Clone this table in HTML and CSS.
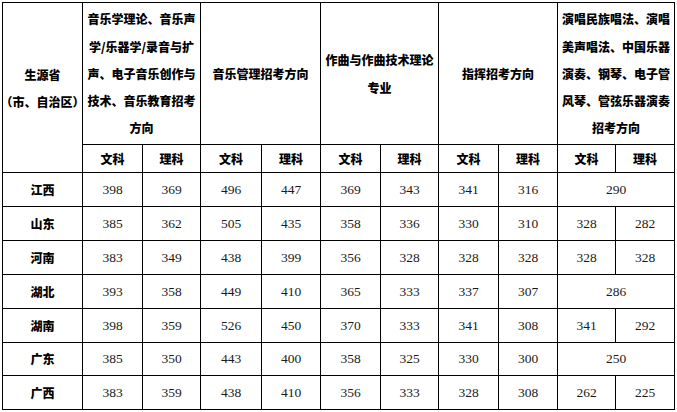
FILE: index.html
```html
<!DOCTYPE html>
<html lang="zh-CN">
<head>
<meta charset="utf-8">
<title>分数线</title>
<link rel="stylesheet" href="styles.css">
</head>
<body>
<table class="score">
  <colgroup>
    <col class="w80"><col class="w60"><col class="w58"><col class="w61"><col class="w59"><col class="w60"><col class="w58"><col class="w60"><col class="w59"><col class="w58"><col class="w59">
  </colgroup>
  <thead>
    <tr class="r-head">
      <th rowspan="2" class="prov-head">生源省<br><span class="nowrap">（市、自治区）</span></th>
      <th colspan="2" class="multi">音乐学理论、音乐声<br>学/乐器学/录音与扩<br>声、电子音乐创作与<br>技术、音乐教育招考<br>方向</th>
      <th colspan="2">音乐管理招考方向</th>
      <th colspan="2" class="multi">作曲与作曲技术理论<br>专业</th>
      <th colspan="2">指挥招考方向</th>
      <th colspan="2" class="multi">演唱民族唱法、演唱<br>美声唱法、中国乐器<br>演奏、钢琴、电子管<br>风琴、管弦乐器演奏<br>招考方向</th>
    </tr>
    <tr class="r-sub">
      <th>文科</th><th>理科</th><th>文科</th><th>理科</th><th>文科</th><th>理科</th><th>文科</th><th>理科</th><th>文科</th><th>理科</th>
    </tr>
  </thead>
  <tbody>
    <tr class="r34"><th>江西</th><td>398</td><td>369</td><td>496</td><td>447</td><td>369</td><td>343</td><td>341</td><td>316</td><td colspan="2">290</td></tr>
    <tr class="r34"><th>山东</th><td>385</td><td>362</td><td>505</td><td>435</td><td>358</td><td>336</td><td>330</td><td>310</td><td>328</td><td>282</td></tr>
    <tr class="r34"><th>河南</th><td>383</td><td>349</td><td>438</td><td>399</td><td>356</td><td>328</td><td>328</td><td>328</td><td>328</td><td>328</td></tr>
    <tr class="r34"><th>湖北</th><td>393</td><td>358</td><td>449</td><td>410</td><td>365</td><td>333</td><td>337</td><td>307</td><td colspan="2">286</td></tr>
    <tr class="r34"><th>湖南</th><td>398</td><td>359</td><td>526</td><td>450</td><td>370</td><td>333</td><td>341</td><td>308</td><td>341</td><td>292</td></tr>
    <tr class="r33"><th>广东</th><td>385</td><td>350</td><td>443</td><td>400</td><td>358</td><td>325</td><td>330</td><td>300</td><td colspan="2">250</td></tr>
    <tr class="r34"><th>广西</th><td>383</td><td>359</td><td>438</td><td>410</td><td>356</td><td>333</td><td>328</td><td>308</td><td>262</td><td>225</td></tr>
  </tbody>
</table>
</body>
</html>
```

FILE: styles.css
```css
html, body {
  margin: 0;
  padding: 0;
  background: #ffffff;
}

body {
  padding: 2px 0 0 2px;
}

.score {
  border-collapse: collapse;
  table-layout: fixed;
  width: 672px;
  font-family: "Noto Sans CJK SC", "Noto Sans", sans-serif;
  color: #000;
}

.w80 { width: 80px; }
.w61 { width: 61px; }
.w60 { width: 60px; }
.w59 { width: 59px; }
.w58 { width: 58px; }

.score th,
.score td {
  border: 1px solid #000;
  padding: 0;
  text-align: center;
  vertical-align: middle;
  overflow: visible;
}

.score th {
  font-weight: 900;
  font-size: 12px;
  line-height: 14px;
}

.score td {
  font-family: "Liberation Serif", serif;
  font-size: 13.5px;
  color: #1a1a1a;
  line-height: 14px;
}

.r-head { height: 142px; }
.r-sub { height: 28px; }
.r34 { height: 34px; }
.r33 { height: 33px; }

.r-head th {
  line-height: 27.3px;
}

.prov-head {
  line-height: 26.7px !important;
  padding-top: 2px !important;
}

.nowrap {
  white-space: nowrap;
  display: inline-block;
  margin: 0 -8px;
}
```
